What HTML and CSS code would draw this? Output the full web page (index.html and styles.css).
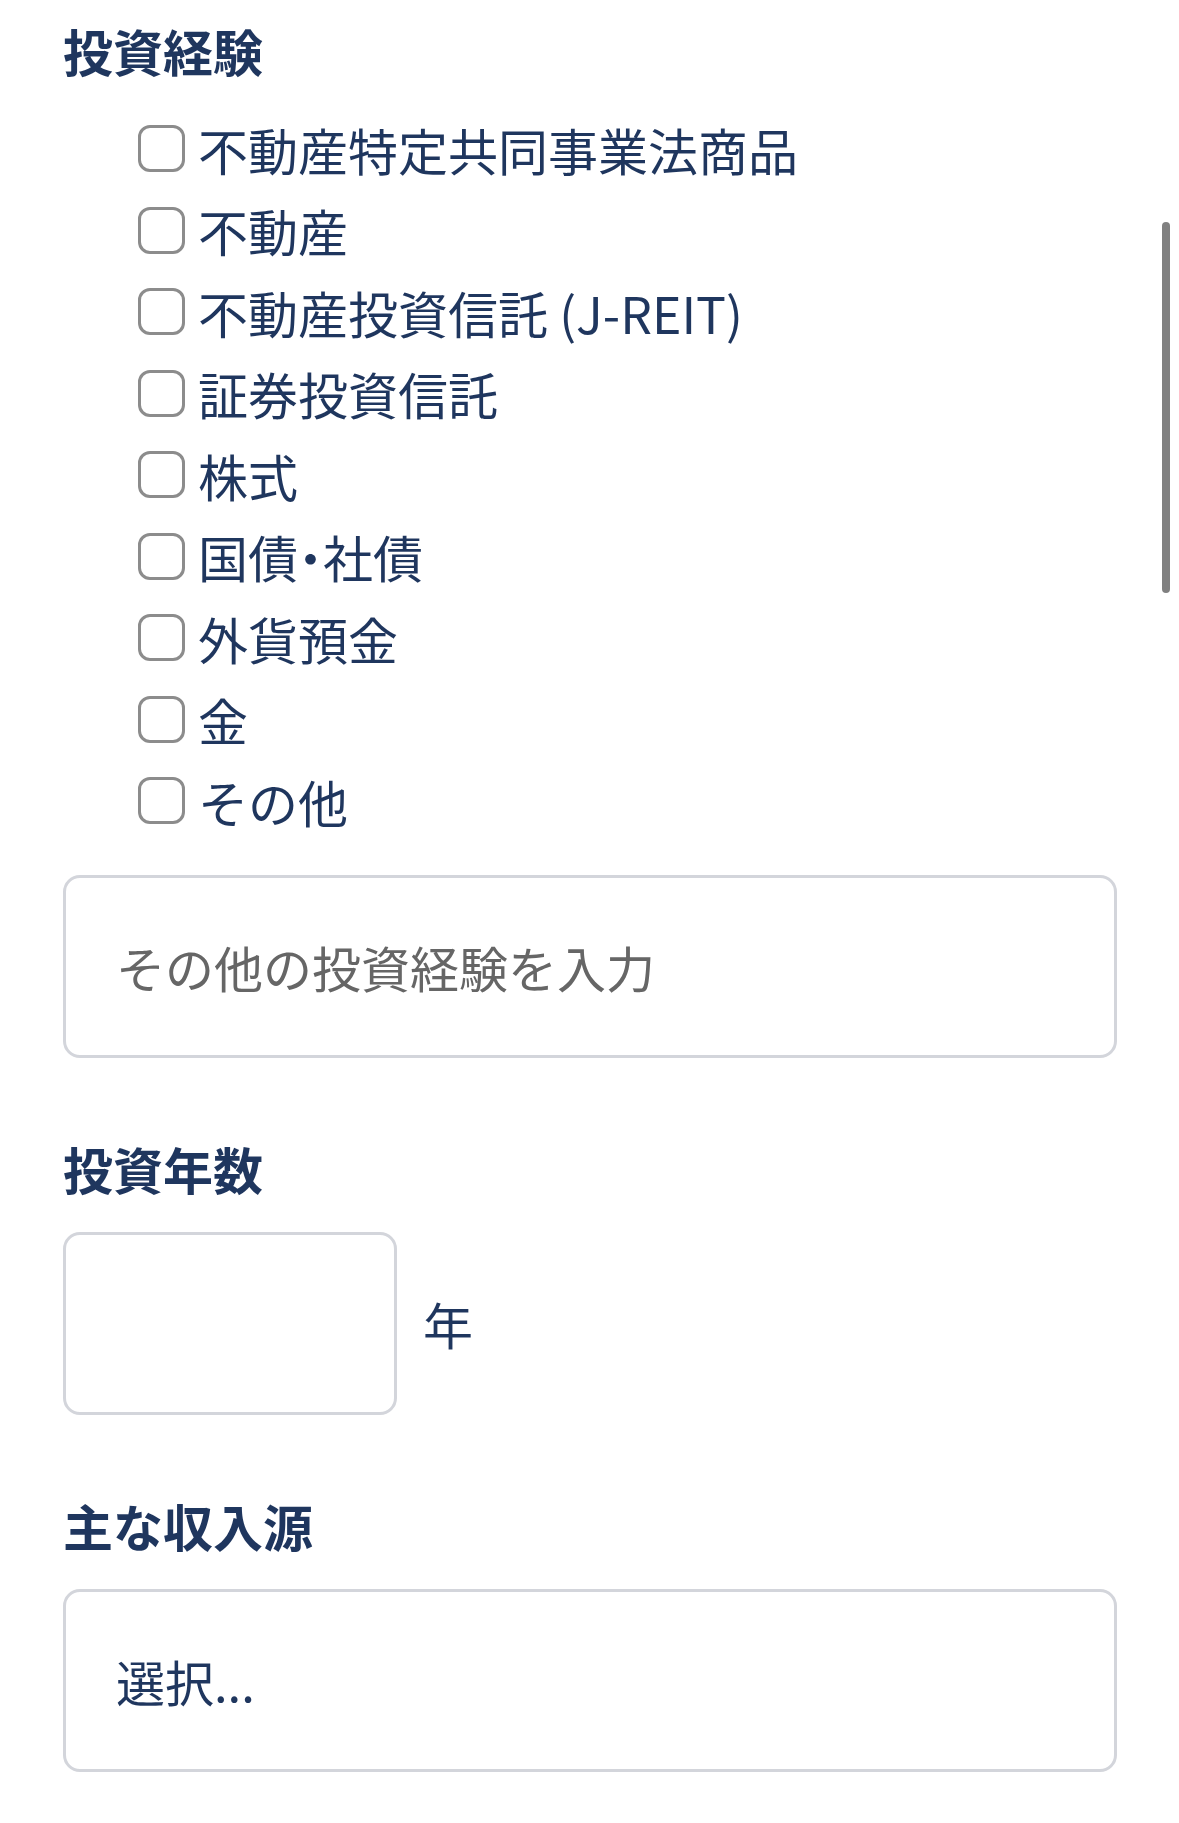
FILE: index.html
```html
<!DOCTYPE html>
<html lang="ja">
<head>
<meta charset="utf-8">
<title>投資経験</title>
<link rel="stylesheet" href="styles.css">
</head>
<body>
<main class="form">
  <section class="field">
    <h2 class="field-label">投資経験</h2>
    <ul class="checks">
      <li><label class="check"><span class="box"></span><span>不動産特定共同事業法商品</span></label></li>
      <li><label class="check"><span class="box"></span><span>不動産</span></label></li>
      <li><label class="check"><span class="box"></span><span>不動産投資信託 (J-REIT)</span></label></li>
      <li><label class="check"><span class="box"></span><span>証券投資信託</span></label></li>
      <li><label class="check"><span class="box"></span><span>株式</span></label></li>
      <li><label class="check"><span class="box"></span><span>国債<span class="dot">・</span>社債</span></label></li>
      <li><label class="check"><span class="box"></span><span>外貨預金</span></label></li>
      <li><label class="check"><span class="box"></span><span>金</span></label></li>
      <li><label class="check"><span class="box"></span><span>その他</span></label></li>
    </ul>
    <input class="text-input other" type="text" placeholder="その他の投資経験を入力">
  </section>

  <section class="field">
    <h2 class="field-label">投資年数</h2>
    <div class="years">
      <input class="text-input short" type="text">
      <span class="unit">年</span>
    </div>
  </section>

  <section class="field">
    <h2 class="field-label">主な収入源</h2>
    <div class="text-input select"><span>選択...</span></div>
  </section>
</main>
<div class="scrollbar"></div>
</body>
</html>
```

FILE: styles.css
```css
* { box-sizing: border-box; }

html, body {
  margin: 0;
  background: #ffffff;
}

body {
  font-family: "Noto Sans CJK JP", "Noto Sans", sans-serif;
  color: #1f365e;
}

.form {
  padding: 14px 62px 30px 63px;
  display: flex;
  flex-direction: column;
  gap: 74px;
}

.field {
  display: flex;
  flex-direction: column;
}

.field-label {
  margin: 0;
  font-size: 50px;
  line-height: 72px;
  font-weight: 700;
  color: #1f365e;
}

.checks {
  list-style: none;
  margin: 22px 0 0;
  padding: 0 0 0 75px;
}

.checks li {
  height: 81.5px;
  display: flex;
  align-items: center;
}

.check {
  display: flex;
  align-items: center;
  gap: 13px;
  font-size: 50px;
  line-height: 1;
  color: #1f365e;
}

.dot {
  font-feature-settings: "palt";
}

.box {
  width: 47px;
  height: 47px;
  border: 3.5px solid #8c8c8c;
  border-radius: 12px;
  flex: none;
}

.text-input {
  display: block;
  height: 183px;
  border: 3px solid #d3d5db;
  border-radius: 17px;
  background: #fff;
  padding: 0 50px;
  font-family: inherit;
  font-size: 49px;
  color: #1f365e;
  outline: none;
}

.text-input::placeholder {
  color: #666666;
}

.other {
  width: 100%;
  margin-top: 33px;
}

.years {
  margin-top: 28px;
  display: flex;
  align-items: center;
  gap: 26px;
}

.short {
  width: 334px;
}

.unit {
  font-size: 50px;
  line-height: 1;
}

.select {
  margin-top: 28px;
  display: flex;
  align-items: center;
}

.scrollbar {
  position: fixed;
  top: 222px;
  right: 9px;
  width: 8px;
  height: 371px;
  border-radius: 4px;
  background: #808080;
}
```
